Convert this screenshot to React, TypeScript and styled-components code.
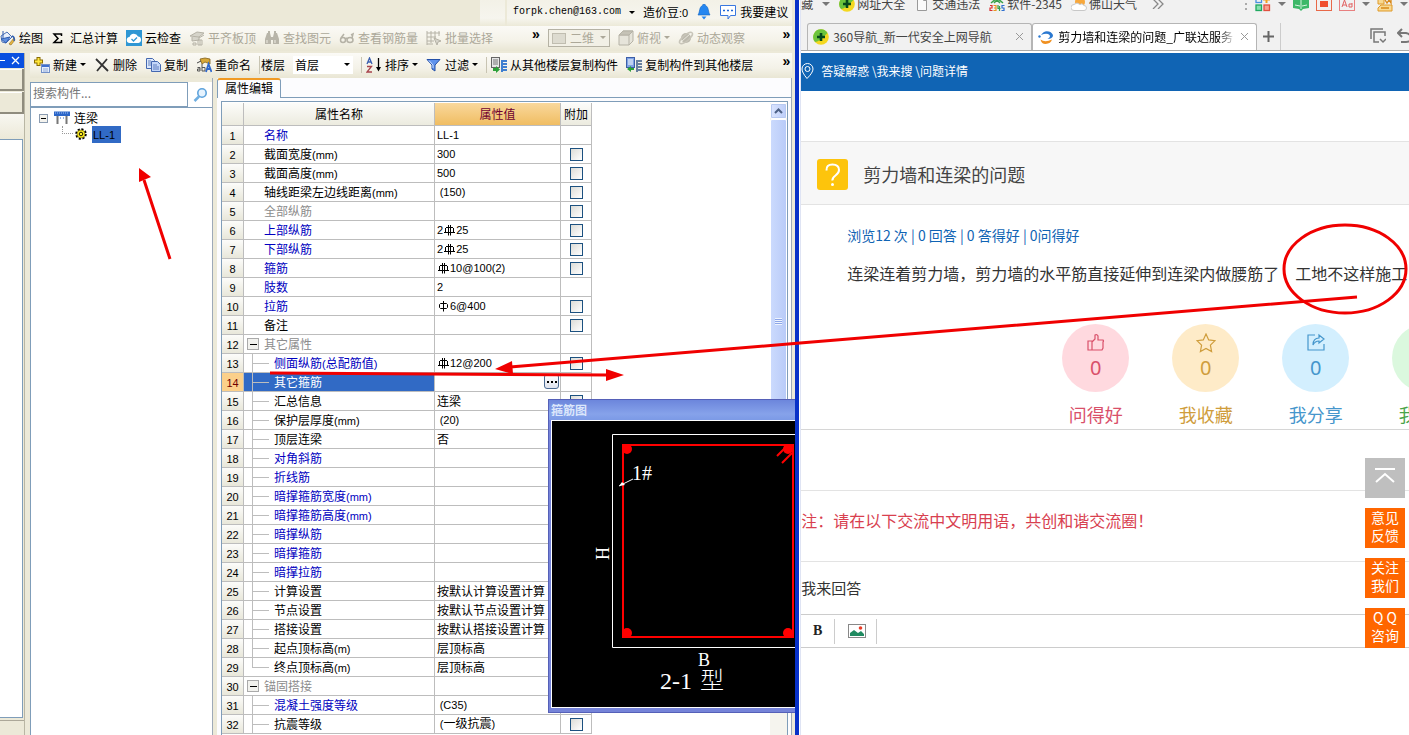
import React from 'react';
import styled, { createGlobalStyle, css } from 'styled-components';

const GlobalStyle = createGlobalStyle`
  * { box-sizing: border-box; }
  html, body, #root { height: 100%; }
  body {
    margin: 0;
    overflow: hidden;
    background: #fff;
    color: #000;
    font: 12px/16px "Noto Sans CJK SC", "Liberation Sans", sans-serif;
  }
  button, input, select { font: inherit; color: inherit; margin: 0; }
  button { border: 0; padding: 0; background: none; }
`;

/* ---------- shared ---------- */

const Latin = styled.span`
  font-family: "Liberation Sans", sans-serif;
  font-size: 11px;
`;

function Mixed({ text }: { text: string }) {
  const runs = text.split(/([\x21-\x7e]+)/).filter(Boolean);
  return (
    <>
      {runs.map((run, i) =>
        /^[\x21-\x7e]/.test(run) ? <Latin key={i}>{run}</Latin> : <React.Fragment key={i}>{run}</React.Fragment>
      )}
    </>
  );
}

const Icon = styled.svg.attrs({ viewBox: '0 0 16 16', 'aria-hidden': true })`
  flex: none;
  width: 16px;
  height: 16px;
  fill: none;
`;

const Caret = styled.span<{ $color?: string; $size?: number }>`
  flex: none;
  width: 0;
  height: 0;
  border: ${p => p.$size ?? 3}px solid transparent;
  border-top-color: ${p => p.$color ?? '#000'};
  border-bottom-width: 0;
`;

/* ---------- frame ---------- */

const Desktop = styled.div`
  position: relative;
  display: grid;
  grid-template-columns: minmax(0, 46fr) minmax(0, 35fr);
  height: 100vh;
  overflow: hidden;
`;

const CadWindow = styled.section`
  position: relative;
  display: flex;
  flex-direction: column;
  overflow: hidden;
  margin-right: 1px;
  padding-right: 3px;
  background: #ece9d8;
  border-right: 4px solid #0831c8;
`;

const AccountBar = styled.div`
  display: flex;
  justify-content: flex-end;
  flex: none;
  height: 26px;
`;

const AccountStub = styled.span`
  width: 25px;
  margin-right: 2px;
  background: linear-gradient(#f3f1e7, #f6f5ee 70%, #ece9d8);
`;

const AccountItems = styled.div`
  display: flex;
  align-items: center;
  padding: 0 4px 2px 6px;
  background: linear-gradient(#f3f1e7, #f6f5ee 70%, #ece9d8);
`;

const Email = styled.span`
  font: 10px/16px "Liberation Mono", monospace;
`;

const AccountButton = styled.button`
  display: flex;
  align-items: center;
  gap: 4px;
  margin-left: 8px;
  white-space: nowrap;
`;

const Toolbar = styled.div`
  display: flex;
  align-items: center;
  gap: 8px;
  flex: none;
  height: 25px;
  padding-bottom: 2px;
  overflow: hidden;
  white-space: nowrap;
  background: linear-gradient(#fbfaf6, #f4f2e8 60%, #e9e6d4);
`;

const MainToolbar = styled(Toolbar)`
  margin-bottom: 2px;
`;

const EditToolbar = styled(Toolbar)`
  padding-left: 4px;
`;

const ToolButton = styled.button`
  display: flex;
  align-items: center;
  gap: 3px;
  flex: none;
  &:disabled { color: #aca899; }
`;

const ToolGroup = styled.div`
  display: flex;
  align-items: center;
  gap: 8px;
  flex: none;
  padding-left: 4px;
  border-left: 1px solid #c8c4b2;
`;

const FloorGroup = styled(ToolGroup)`
  padding-left: 1px;
`;

const ComboBox = styled.span<{ $disabled?: boolean }>`
  display: flex;
  align-items: center;
  flex: none;
  width: 60px;
  height: 18px;
  padding: 0 3px 0 2px;
  background: #fff;
  select {
    flex: 1;
    min-width: 0;
    border: 0;
    padding: 0;
    appearance: none;
    background: none;
    opacity: 1;
  }
  ${p => p.$disabled && css`
    gap: 3px;
    width: 62px;
    color: #aca899;
    background: #f2f0e6;
    border: 1px solid #b5b2a4;
  `}
`;

const More = styled.button<{ $push?: boolean }>`
  align-self: flex-start;
  margin-left: ${p => (p.$push ? 'auto' : '31px')};
  padding-right: ${p => (p.$push ? '2px' : '0')};
  font: 700 14px/16px "Liberation Sans", sans-serif;
`;

/* ---------- workspace ---------- */

const Workspace = styled.div`
  display: flex;
  flex: 1;
  min-height: 0;
`;

const Dock = styled.aside`
  display: flex;
  flex-direction: column;
  flex: none;
  width: 25px;
  margin-right: 5px;
  border-right: 1px solid #b9b6a4;
`;

const DockTitle = styled.div`
  display: flex;
  align-items: center;
  justify-content: flex-end;
  gap: 6px;
  height: 15px;
  padding-right: 4px;
  background: #0a50e0;
`;

const DockButton = styled.button`
  height: 22px;
  margin-top: 1px;
  background: #ece9d8;
  border: solid #8f8c7e;
  border-width: 0 2px 2px 0;
  box-shadow: inset 0 1px #fff;
`;

const DockGap = styled.div`
  height: 25px;
  background: linear-gradient(#f8f7f1, #ece9d8);
`;

const DockList = styled.div`
  flex: 1;
  margin: 0 1px 2px 0;
  background: #fff;
  border: solid #7f9db9;
  border-width: 1px 1px 1px 0;
`;

const DockFoot = styled.div`
  height: 94px;
  border-top: 1px solid #aca899;
`;

const DockFooter = styled(DockFoot)`
  height: 15px;
`;

const Editor = styled.div`
  display: flex;
  flex-direction: column;
  flex: 1;
  min-width: 0;
`;

const EditorBody = styled.div`
  display: flex;
  gap: 4px;
  flex: 1;
  min-height: 0;
`;

const TreePanel = styled.div`
  display: flex;
  flex-direction: column;
  flex: none;
  width: 183px;
  padding-top: 4px;
  border-right: 1px solid #9da9b8;
`;

const SearchBox = styled.div`
  display: flex;
  height: 25px;
  input {
    flex: 1;
    min-width: 0;
    height: 25px;
    padding: 0 2px 4px;
    background: #fff;
    border: 1px solid #7f9db9;
    outline: 0;
  }
  input::placeholder { color: #777; opacity: 1; }
  button {
    display: grid;
    place-items: center;
    width: 24px;
    background: #fff;
  }
`;

const Tree = styled.ul`
  flex: 1;
  margin: 0;
  padding: 2px 0 0 8px;
  list-style: none;
  background: #fff;
  border: solid #7f9db9;
  border-width: 1px 0 0 1px;
  ul { margin: 0; padding: 0 0 0 23px; list-style: none; }
`;

const TreeItem = styled.div`
  display: flex;
  align-items: center;
  height: 16px;
`;

const TreeToggle = styled.button`
  display: grid;
  place-items: center;
  width: 9px;
  height: 9px;
  margin-right: 6px;
  background: #f4f3ee;
  border: 1px solid #8a9bb0;
  &::before { content: ""; width: 5px; height: 1px; background: #000; }
`;

const TreeStem = styled.span`
  width: 11px;
  height: 8px;
  align-self: flex-start;
  border: dotted #999;
  border-width: 0 0 1px 1px;
`;

const TreeLabel = styled.span<{ $selected?: boolean }>`
  margin-left: 3px;
  padding: 0 2px 0 1px;
  ${p => p.$selected && css`padding-right: 6px; background: #316ac5;`}
`;

/* ---------- property grid ---------- */

const PropertyPanel = styled.div`
  display: flex;
  flex-direction: column;
  flex: 1;
  min-width: 0;
  background: #fcfcfe;
  border-right: 1px solid #9da9b8;
`;

const TabRow = styled.div`
  display: flex;
  height: 20px;
  &::after { content: ""; flex: 1; border-bottom: 1px solid #7f9db9; }
`;

const PanelTab = styled.button`
  width: 64px;
  padding-bottom: 2px;
  background: #fcfcfe;
  border: 1px solid #7f9db9;
  border-top: 2px solid #f09a24;
  border-bottom: 0;
  border-radius: 3px 3px 0 0;
`;

const GridFrame = styled.div`
  display: flex;
  justify-content: space-between;
  flex: 1;
  min-height: 0;
  margin: 3px 3px 0 4px;
  padding-top: 1px;
  overflow: hidden;
  background: #fff;
  border: solid #7f9db9;
  border-width: 1px 1px 0;
`;

const Table = styled.table`
  width: 370px;
  height: max-content;
  table-layout: fixed;
  border-collapse: separate;
  border-spacing: 0;
  white-space: nowrap;
  th, td { padding: 0; border: solid #bdbdbd; border-width: 0 1px 1px 0; font-weight: 400; }
  th[scope=col] { height: 23px; background: linear-gradient(#fcfcfa, #ecebdf); }
  th[scope=row] { height: 19px; background: linear-gradient(#fcfcfa, #e8e7da); }
`;

const ValueHead = styled.th`
  &&& { color: #700030; background: linear-gradient(#f9d89c, #f0bd62); }
`;

const RowNumber = styled.th<{ $active?: boolean }>`
  text-align: center;
  ${p => p.$active && css`&&& { color: #700000; background: #fbd08a; }`}
`;

type Tone = 'blue' | 'gray' | 'black';

const NameCell = styled.td<{ $tone: Tone; $active?: boolean }>`
  color: ${p => (p.$active ? '#fff' : { blue: '#0000c0', gray: '#8c8c8c', black: '#000' }[p.$tone])};
  background: ${p => (p.$active ? '#316ac5' : '#fff')};
`;

const NameLine = styled.div<{ $indent: number }>`
  display: flex;
  align-items: center;
  height: 18px;
  padding-left: ${p => p.$indent}px;
`;

const Branch = styled.span<{ $last?: boolean }>`
  width: 17px;
  height: 18px;
  margin-right: 5px;
  background:
    linear-gradient(#bdbdbd, #bdbdbd) 0 0 / 1px ${p => (p.$last ? '9px' : '18px')} no-repeat,
    linear-gradient(#bdbdbd, #bdbdbd) 0 9px / 17px 1px no-repeat;
`;

const GroupToggle = styled.button`
  display: grid;
  place-items: center;
  width: 12px;
  height: 12px;
  margin-right: 5px;
  background: #f2f2ee;
  border: 1px solid #aaa;
  &::before { content: ""; width: 7px; height: 1px; background: #000; }
`;

const ValueLine = styled.div`
  display: flex;
  align-items: center;
  height: 18px;
  padding: 0 1px 1px 2px;
`;

const EllipsisButton = styled.button`
  display: flex;
  align-items: center;
  justify-content: center;
  gap: 2px;
  width: 15px;
  height: 15px;
  margin-left: auto;
  background: linear-gradient(#fff, #dfe3ee);
  border: 1px solid #4a6a92;
  border-radius: 3px;
  i { width: 2px; height: 2px; background: #000; }
`;

const Check = styled.input.attrs({ type: 'checkbox' })`
  display: block;
  appearance: none;
  width: 13px;
  height: 13px;
  && { margin: 0 auto; }
  background: linear-gradient(135deg, #dcdcd7, #fff);
  border: 1px solid #1c5180;
`;

const ScrollBar = styled.div`
  display: flex;
  flex-direction: column;
  width: 17px;
  background: #f5f4ee;
`;

const ScrollUp = styled.button`
  display: grid;
  place-items: center;
  height: 16px;
  background: linear-gradient(90deg, #dbe5fe, #bccdf9);
  border: 1px solid #fff;
  outline: 1px solid #b7c9f0;
  outline-offset: -2px;
  border-radius: 2px;
`;

const ScrollThumb = styled.div`
  display: grid;
  place-items: center;
  height: 404px;
  background: linear-gradient(90deg, #cbdafd, #b9cbf8);
  border: 1px solid #fff;
  border-radius: 2px;
  &::before {
    content: "";
    width: 7px;
    height: 7px;
    background: repeating-linear-gradient(#eef4fe 0 1px, #8ca5e8 1px 2px);
  }
`;

/* ---------- floating diagram ---------- */

const Floating = styled.div`
  position: absolute;
  top: 399px;
  left: 548px;
  right: 0;
  height: 314px;
  display: flex;
  flex-direction: column;
  padding: 0 0 4px 2px;
  background: #7583d8;
  border: solid #5560b8;
  border-width: 1px 0 1px 1px;
`;

const FloatingTitle = styled.div`
  height: 20px;
  margin-left: -2px;
  padding: 2px 2px 0;
  color: #dbe6fb;
  font-weight: 700;
  background: linear-gradient(#6c86dc, #86a2ea 70%, #7c9ae6);
`;

const Drawing = styled.svg`
  flex: 1;
  min-height: 0;
  width: 100%;
  background: #000;
  border: solid #fff;
  border-width: 1px 0 1px 1px;
  fill: none;
`;

/* ---------- browser ---------- */

const BrowserWindow = styled.section`
  position: relative;
  display: flex;
  flex-direction: column;
  min-width: 0;
  overflow: hidden;
  background: #fff;
  border-left: 1px solid #dfe4f4;
`;

const Bookmarks = styled.div`
  display: flex;
  align-items: center;
  gap: 9px;
  flex: none;
  height: 24px;
  margin-top: -8px;
  color: #444;
  white-space: nowrap;
  background: #f1f1f1;
`;

const Bookmark = styled.a.attrs({ href: '#' })`
  display: flex;
  align-items: center;
  gap: 2px;
  color: inherit;
  text-decoration: none;
`;

const Tools = styled.div`
  display: flex;
  align-items: center;
  gap: 7px;
  margin-left: auto;
  padding-right: 1px;
`;

const TabStrip = styled.div`
  display: flex;
  align-items: flex-end;
  flex: none;
  height: 35px;
  padding-left: 6px;
  background: #f1f1f1;
  border-bottom: 1px solid #a9a9a9;
`;

const BrowserTab = styled.div<{ $active?: boolean }>`
  display: flex;
  align-items: center;
  gap: 4px;
  flex: 0 1 225px;
  min-width: 0;
  height: 27px;
  padding: 0 7px 1px 5px;
  color: ${p => (p.$active ? '#000' : '#444')};
  background: ${p => (p.$active ? '#fff' : '#f1f1f1')};
  border: 1px solid #b5b5b5;
  border-bottom: 0;
  border-radius: 3px 3px 0 0;
`;

const TabTitle = styled.span<{ $fade?: boolean }>`
  flex: 1;
  overflow: hidden;
  white-space: nowrap;
  ${p => p.$fade && css`mask-image: linear-gradient(90deg, #000 90%, transparent);`}
`;

const CloseButton = styled.button`
  display: grid;
  place-items: center;
  width: 9px;
`;

const NewTab = styled.button`
  display: grid;
  place-items: center;
  width: 24px;
  height: 27px;
  border-right: 1px solid #ccc;
`;

const TabTools = styled.div`
  display: flex;
  gap: 11px;
  margin-left: auto;
  padding-bottom: 6px;
`;

const Crumbs = styled.nav`
  display: flex;
  align-items: center;
  gap: 6px;
  flex: none;
  height: 38px;
  margin-top: 2px;
  padding-bottom: 3px;
  color: #fff;
  background: #1064b4;
  a { color: inherit; text-decoration: none; }
`;

const QuestionHead = styled.header`
  display: flex;
  align-items: center;
  gap: 15px;
  flex: none;
  height: 64px;
  margin-top: 50px;
  padding: 3px 16px 0;
  background: #f7f7f7;
  border: solid #e3e3e3;
  border-width: 1px 0;
  h1 { margin: 0; padding-bottom: 1px; color: #444; font-size: 18px; line-height: 24px; font-weight: 400; }
`;

const QuestionIcon = styled.svg`
  width: 31px;
  height: 31px;
  fill: none;
`;

const QuestionBody = styled.div`
  display: flex;
  flex-direction: column;
  flex: none;
  height: 225px;
  padding: 20px 0 0 46px;
  white-space: nowrap;
  border-bottom: 1px solid #d6d6d6;
`;

const Meta = styled.p`
  margin: 0;
  color: #1064b4;
  font: 14px/20px "Noto Sans CJK SC", sans-serif;
`;

const Content = styled.p`
  display: flex;
  gap: 16px;
  margin: 16px 0 0;
  color: #333;
  font-size: 16px;
  line-height: 24px;
`;

const Stats = styled.div`
  display: flex;
  gap: 43px;
  margin: 39px 0 0 215px;
`;

const Stat = styled.button<{ $fg: string }>`
  display: flex;
  flex-direction: column;
  align-items: center;
  gap: 10px;
  flex: none;
  width: 67px;
  color: ${p => p.$fg};
  font-size: 18px;
  line-height: 24px;
`;

const Bubble = styled.span<{ $bg: string }>`
  display: flex;
  flex-direction: column;
  align-items: center;
  gap: 3px;
  width: 67px;
  height: 68px;
  padding-top: 9px;
  border-radius: 50%;
  background: ${p => p.$bg};
  font: 20px/24px "Noto Sans", sans-serif;
  svg { width: 20px; height: 20px; }
`;

const Notice = styled.p`
  flex: none;
  height: 72px;
  margin: 60px 0 0;
  padding-top: 17px;
  color: #d8404f;
  font-size: 16px;
  line-height: 24px;
  border: solid #e3e3e3;
  border-width: 1px 0;
`;

const AnswerTitle = styled.h2`
  flex: none;
  margin: 14px 0;
  color: #333;
  font-size: 15px;
  line-height: 24px;
  font-weight: 400;
`;

const FormatBar = styled.div`
  display: flex;
  align-items: center;
  flex: none;
  height: 34px;
  border: solid #ccc;
  border-width: 1px 0;
  button {
    display: grid;
    place-items: center;
    height: 25px;
    border-right: 1px solid #ccc;
  }
`;

const BoldButton = styled.button`
  width: 34px;
  color: #222;
  font: 700 14px/16px "Liberation Serif", serif;
`;

const ImageButton = styled.button`
  width: 42px;
  padding: 0 0 0 3px;
`;

const SideRail = styled.div`
  position: absolute;
  top: 458px;
  right: 4px;
  display: grid;
  gap: 10px;
`;

const RailButton = styled.button<{ $gray?: boolean }>`
  display: grid;
  place-items: center;
  width: 40px;
  height: 40px;
  padding-bottom: 4px;
  color: #fff;
  font-size: 14px;
  line-height: 18px;
  background: ${p => (p.$gray ? '#bfbfbf' : '#ff6600')};
  span { width: 28px; }
`;

const Annotations = styled.svg`
  position: absolute;
  inset: 0;
  width: 100%;
  height: 100%;
  pointer-events: none;
  fill: none;
  stroke: #f00000;
  stroke-width: 3;
`;

/* ---------- icons ---------- */

const PaintIcon = () => (
  <Icon>
    <path d="M1 6l6-4 5 5-6 6-4-1z" fill="#e8f0fc" stroke="#4a6fb5" />
    <path d="M3 1v7M1 9l9-2-4 6z" stroke="#2f5db0" fill="#5f8fe0" />
    <path d="M9 14l5-6 1 2-4 5z" fill="#e8b840" stroke="#8f6a20" strokeWidth=".6" />
    <path d="M12 6q3 1 2 5" stroke="#2f5db0" strokeWidth="1.5" />
  </Icon>
);
const SigmaIcon = () => (
  <Icon><path d="M10.500 6V4H3l4 4.500L3 12.500h7.500V10" stroke="#000" strokeWidth="1.500" /></Icon>
);
const CloudIcon = () => (
  <Icon>
    <rect width="16" height="16" fill="#2f97d4" />
    <path d="M4 13a3 3 0 0 1-.5-6 4.500 4.500 0 0 1 8.500-.5 3.300 3.300 0 0 1 .5 6.500z" fill="#fff" />
    <path d="M5.500 9l2 2L11 7.500" stroke="#2f97d4" strokeWidth="1.300" />
  </Icon>
);
const SlabIcon = () => (
  <Icon stroke="#b5b2a6">
    <path d="M1 6l7-4 7 1-5 4zM3 7v4l7-1V7M10 8l5-3" fill="#d6d4ca" /><path d="M4 13h3v2H4zM9 10h4v5H9zM11 10v5" />
  </Icon>
);
const BinocularsIcon = () => (
  <Icon fill="#b8b5a9">
    <path d="M3 3h3l1 4v7H1V9zM10 3h3l2 6v5H9V7zM7 7h2v3H7zM4 1h2v2H4zM10 1h2v2h-2z" fill="#b8b5a9" />
    <path d="M3 10v3M11 10v3" stroke="#f0eee4" />
  </Icon>
);
const GlassesIcon = () => (
  <Icon stroke="#b5b2a6" strokeWidth="1.500"><circle cx="4" cy="10" r="2.500" /><ellipse cx="11" cy="10" rx="3" ry="2.500" /><path d="M6 9l2-1M13 8l1-4-2 1M2 8l3-4" /></Icon>
);
const BatchIcon = () => (
  <Icon stroke="#b5b2a6"><path d="M1 1v14M1 3h13M1 7h9M1 11h7M5 1v12M9 1v8M13 1v5M1 14h6" /><path d="M8 8l7 3-3 1-1 3z" fill="#d6d4ca" /></Icon>
);
const CubeIcon = () => (
  <Icon stroke="#b5b2a6"><path d="M1 5l4-4h10v10l-4 4H1z" fill="#e6e4da" /><path d="M1 5h10v10M11 5l4-4" /><path d="M1 5l4-4h10l-4 4z" fill="#c5c2b6" /></Icon>
);
const OrbitIcon = () => (
  <Icon><circle cx="8" cy="8" r="5" fill="#bcb9ad" /><ellipse cx="8" cy="8" rx="8" ry="3" transform="rotate(-40 8 8)" stroke="#c8c5b9" strokeWidth="1.500" /><path d="M4 11l8-7" stroke="#e8e6dc" /></Icon>
);
const RectIcon = () => (
  <Icon><rect x="1.500" y="3.500" width="13" height="10" fill="#dddbd0" stroke="#c0bdb0" /></Icon>
);
const NewIcon = () => (
  <Icon>
    <path d="M4.500 0v9M0 4.500h9" stroke="#8a6d00" strokeWidth="4" /><path d="M4.500 1v7M1 4.500h7" stroke="#ffe63c" strokeWidth="2" />
    <rect x="7.500" y="7.500" width="8" height="8" fill="#e6effc" stroke="#7290c8" /><path d="M8 9h7" stroke="#3f6fd0" strokeWidth="2" /><path d="M9 12h5M9 14h5" stroke="#8fa8d8" />
  </Icon>
);
const DeleteIcon = () => (
  <Icon stroke="#333" strokeWidth="1.800"><path d="M2 2l12 12M13 2L3 14" /></Icon>
);
const CopyIcon = () => (
  <Icon stroke="#4468b0">
    <path d="M1.500 1.500h6l2 2v8h-8z" fill="#dce8fb" /><path d="M6.500 4.500h6l3 3v7h-9z" fill="#c3d6f8" /><path d="M8 8h4M8 10h6M8 12h6M3 4h3M3 6h3M3 8h3" strokeWidth=".8" />
  </Icon>
);
const RenameIcon = () => (
  <Icon>
    <path d="M4 2l5-1 5 1v5l-5-2-3 2z" fill="#d8a838" stroke="#80601c" strokeWidth=".8" /><path d="M1 6l4-2" stroke="#444" />
    <path d="M1.500 10.500H4V14H1.500v-2H4M6 7v7h3v-3.500H6" stroke="#555" /><path d="M10 15l2.500-8 3 8M11 12h4" stroke="#2f68cc" strokeWidth="1.800" />
  </Icon>
);
const SortIcon = () => (
  <Icon>
    <path d="M1 7l2.500-6L6 7M2 5h3" stroke="#3a5fb0" strokeWidth="1.300" /><path d="M1 9.500h4.500L1 15h5" stroke="#a8434c" strokeWidth="1.300" />
    <path d="M12.500 1v11" stroke="#000" strokeWidth="1.300" /><path d="M10 10h5l-2.500 4.500z" fill="#000" />
  </Icon>
);
const FunnelIcon = () => (
  <Icon><path d="M1 2.500h13l-5 5.500v6l-3-2V8z" fill="#5f92ec" stroke="#2450a8" /><path d="M3 3.500l4 4.500v3" stroke="#cfe0ff" /></Icon>
);
const TransferIcon = ({ flip }: { flip?: boolean }) => (
  <Icon>
    <rect x=".5" y=".5" width="8" height="10" fill={flip ? '#7ea2e4' : '#e6e6e6'} stroke={flip ? '#3c5ea8' : '#666'} />
    <path d="M2 3h5M2 5h5M2 7h5" stroke={flip ? '#fff' : '#777'} />
    <path d="M11 3v12M11 4h5M11 7h5M11 10h5M11 13h5" stroke={flip ? '#68809f' : '#3f7fd0'} strokeWidth="2" />
    <path d={flip ? 'M8 11H5V9l-4 3 4 3v-2h3z' : 'M2 11h3V9l4 3.500L5 16v-2H2z'} fill="#2ca038" />
  </Icon>
);
const BellIcon = () => (
  <Icon><path d="M8 0q1.500 0 1.500 1.500C13 3 12 8 14 11H2c2-3 1-8 4.500-9.500Q6.500 0 8 0z" fill="#2486f0" stroke="#1464c0" strokeWidth=".6" /><path d="M5.500 12.500h5L8 15.500z" fill="#2486f0" /></Icon>
);
const MessageIcon = () => (
  <Icon><path d="M.5 1.500h15v10h-5L8 15v-3.500H.5z" fill="#fff" stroke="#3a78e0" /><path d="M3 6.500h2M7 6.500h2M11 6.500h2" stroke="#1e66d8" strokeWidth="1.500" /></Icon>
);
const SearchIcon = () => (
  <Icon><circle cx="10" cy="6" r="4.200" fill="#e6f3fe" stroke="#5ea3dc" strokeWidth="1.600" /><path d="M7 9.500l-4.500 4.500" stroke="#6faee0" strokeWidth="2.500" /></Icon>
);
const BeamIcon = () => (
  <Icon><path d="M0 1.500h16V6H0z" fill="#2c66c8" /><path d="M1 3h14" stroke="#9fc0f4" strokeDasharray="1 1" /><path d="M3.500 6v8M12.500 6v8" stroke="#777" strokeWidth="2" /><path d="M6 8h1M9 8h1" stroke="#2c66c8" /></Icon>
);
const GearIcon = () => (
  <Icon>
    <circle cx="8" cy="8" r="4.500" stroke="#000" strokeWidth="2.500" strokeDasharray="2 1.500" /><circle cx="8" cy="8" r="4" fill="#ffee22" stroke="#5c5400" strokeWidth=".6" />
    <circle cx="8" cy="8" r="1.800" stroke="#000" strokeWidth=".9" />
  </Icon>
);
const NavIcon = () => (
  <Icon><circle cx="8" cy="8" r="7.800" fill="#f4d820" /><path d="M8 .2a7.800 7.800 0 0 0-6 12.800Q6 13 14.500 4A7.800 7.800 0 0 0 8 .2z" fill="#6cc43c" /><path d="M8 4v8M4 8h8" stroke="#06491c" strokeWidth="2.600" /></Icon>
);
const PageIcon = () => (
  <Icon><path d="M3.500 1.500h6l3 3v10h-9zM9.500 1.500v3h3" stroke="#999" fill="#fafafa" /></Icon>
);
const NumbersIcon = () => (
  <Icon strokeWidth="1.200">
    <path d="M2 7l6-5 6 5M5 7l3-3 3 3" stroke="#38a048" strokeWidth="1.500" />
    <path d="M1 9.500h2V12H1v2.500h2.500" stroke="#d83030" /><path d="M4.500 9.500h2.500V12H5h2v2.500H4.500" stroke="#e89820" /><path d="M9 9v3.500h2.500M10.500 10v5" stroke="#38a048" /><path d="M15.500 9.500H13V12h2v2.500h-2.500" stroke="#3070d0" />
  </Icon>
);
const WeatherIcon = () => (
  <Icon><circle cx="9" cy="6" r="5" fill="#f8a83c" /><path d="M3 14.500a3 3 0 0 1 0-6q3-3 6 0 2-2 4 1a2.500 2.500 0 0 1 0 5z" fill="#fff" stroke="#c8c8c8" /></Icon>
);
const SwirlIcon = () => (
  <Icon>
    <path d="M3 6Q6 1 11 2.500q4 1.500 4 4.500-1 3-5.500 3Q13 8 11.500 6 9 3.500 3 6z" fill="#2a78d0" />
    <path d="M2.500 10.500Q7 14 14 10.500q-1 4-6.500 4.500-4 0-5-4.500z" fill="#f09020" />
    <circle cx="1.500" cy="7.500" r="1.200" fill="#2a78d0" />
  </Icon>
);
const AppsIcon = () => (
  <Icon strokeWidth="1.300"><rect x="1" y="1" width="5.500" height="5.500" stroke="#4a90e0" /><path d="M11.500 0v7M8 3.500h7" stroke="#f0a020" strokeWidth="2" /><rect x="1" y="9" width="5.500" height="5.500" stroke="#20a860" fill="#88e0b0" /><rect x="9" y="9" width="5.500" height="5.500" stroke="#e05040" fill="#f8a090" /></Icon>
);
const BookIcon = () => (
  <Icon><path d="M0 1l8 2 8-2v11l-6 1-2 2-2-2-6-1z" fill="#3cb868" /><path d="M8 3v10M2 9l5 1M14 9l-5 1" stroke="#d8f4e0" /></Icon>
);
const CaptureIcon = () => (
  <Icon><rect x=".5" y=".5" width="15" height="14" stroke="#e86848" /><rect x="4" y="5" width="8" height="6" fill="#f05030" /></Icon>
);
const TranslateIcon = () => (
  <Icon><rect x=".5" y=".5" width="15" height="14" stroke="#e88080" /><path d="M3 11l2.500-7L8 11M4 9h3M13 7v4h-3V8h3" stroke="#e06060" /></Icon>
);
const GameIcon = () => (
  <Icon><path d="M1 1h6v7H1zM4 9h11v6H1v-3z" fill="#f8d890" stroke="#e09a28" /><path d="M8 4l2 3 2-3 2 3V1M4 12h8" stroke="#d88818" strokeWidth="1.300" /></Icon>
);

/* ---------- data ---------- */

type Prop = {
  name: string;
  tone?: Tone;
  value?: string;
  bar?: 1 | 3;
  lead?: string;
  check?: boolean;
  level?: 'group' | 'child' | 'last';
};

const rows: Prop[] = [
  { name: '名称', tone: 'blue', value: 'LL-1' },
  { name: '截面宽度(mm)', value: '300', check: true },
  { name: '截面高度(mm)', value: '500', check: true },
  { name: '轴线距梁左边线距离(mm)', value: ' (150)', check: true },
  { name: '全部纵筋', tone: 'gray', check: true },
  { name: '上部纵筋', tone: 'blue', lead: '2', bar: 3, value: '25', check: true },
  { name: '下部纵筋', tone: 'blue', lead: '2', bar: 3, value: '25', check: true },
  { name: '箍筋', tone: 'blue', bar: 3, value: '10@100(2)', check: true },
  { name: '肢数', tone: 'blue', value: '2' },
  { name: '拉筋', tone: 'blue', bar: 1, value: '6@400', check: true },
  { name: '备注', check: true },
  { name: '其它属性', tone: 'gray', level: 'group' },
  { name: '侧面纵筋(总配筋值)', tone: 'blue', bar: 3, value: '12@200', check: true, level: 'child' },
  { name: '其它箍筋', level: 'child' },
  { name: '汇总信息', value: '连梁', check: true, level: 'child' },
  { name: '保护层厚度(mm)', value: ' (20)', level: 'child' },
  { name: '顶层连梁', value: '否', level: 'child' },
  { name: '对角斜筋', tone: 'blue', level: 'child' },
  { name: '折线筋', tone: 'blue', level: 'child' },
  { name: '暗撑箍筋宽度(mm)', tone: 'blue', level: 'child' },
  { name: '暗撑箍筋高度(mm)', tone: 'blue', level: 'child' },
  { name: '暗撑纵筋', tone: 'blue', level: 'child' },
  { name: '暗撑箍筋', tone: 'blue', level: 'child' },
  { name: '暗撑拉筋', tone: 'blue', level: 'child' },
  { name: '计算设置', value: '按默认计算设置计算', level: 'child' },
  { name: '节点设置', value: '按默认节点设置计算', level: 'child' },
  { name: '搭接设置', value: '按默认搭接设置计算', level: 'child' },
  { name: '起点顶标高(m)', value: '层顶标高', level: 'child' },
  { name: '终点顶标高(m)', value: '层顶标高', level: 'last' },
  { name: '锚固搭接', tone: 'gray', level: 'group' },
  { name: '混凝土强度等级', tone: 'blue', value: ' (C35)', level: 'child' },
  { name: '抗震等级', value: ' (一级抗震)', check: true, level: 'child' },
];

const ACTIVE_ROW = 14;

const BarGlyph = styled.svg`
  flex: none;
  width: 13px;
  height: 12px;
  fill: none;
  stroke: #000;
`;

const RebarMark = ({ grade }: { grade: 1 | 3 }) => (
  <BarGlyph viewBox="0 0 13 12" role="img" aria-label={`${grade}级钢筋`}>
    {grade === 3
      ? <path d="M3 3.500h7M2.500 4v4M10.500 4v4M1 8.500h11M5.500 1v10.500M7.500 1v10.500" />
      : <path d="M3.500 3.500h6l1 1v3l-1 1h-6l-1-1v-3zM6.500 1v10.500" />}
  </BarGlyph>
);

function PropertyRow({ row, index }: { row: Prop; index: number }) {
  const active = index === ACTIVE_ROW;
  const plain = !row.level;
  return (
    <tr>
      <RowNumber scope="row" $active={active}><Latin>{index}</Latin></RowNumber>
      <NameCell $tone={row.tone ?? 'black'} $active={active}>
        <NameLine $indent={plain ? 20 : row.level === 'group' ? 3 : 8}>
          {row.level === 'group' && <GroupToggle aria-label="折叠" />}
          {(row.level === 'child' || row.level === 'last') && <Branch $last={row.level === 'last'} />}
          <span><Mixed text={row.name} /></span>
        </NameLine>
      </NameCell>
      <td>
        <ValueLine>
          {row.lead && <Latin>{row.lead}</Latin>}
          {row.bar && <RebarMark grade={row.bar} />}
          {row.value && <span>{row.value.startsWith(' ') && '\u00a0'}<Mixed text={row.value.trim()} /></span>}
          {active && <EllipsisButton aria-label="编辑"><i /><i /><i /></EllipsisButton>}
        </ValueLine>
      </td>
      <td>{row.check && <Check aria-label={`附加 ${row.name}`} />}</td>
    </tr>
  );
}

function Cad() {
  return (
    <CadWindow>
      <AccountBar>
        <AccountStub />
        <AccountItems>
          <Email>forpk.chen@163.com</Email>
          <AccountButton aria-label="账户"><Caret /></AccountButton>
          <AccountButton><span>造价豆<Latin>:0</Latin></span></AccountButton>
          <AccountButton aria-label="通知"><BellIcon /></AccountButton>
          <AccountButton><MessageIcon />我要建议</AccountButton>
        </AccountItems>
      </AccountBar>
      <MainToolbar>
        <ToolButton><PaintIcon />绘图</ToolButton>
        <ToolButton><SigmaIcon />汇总计算</ToolButton>
        <ToolButton><CloudIcon />云检查</ToolButton>
        <ToolButton disabled><SlabIcon />平齐板顶</ToolButton>
        <ToolButton disabled><BinocularsIcon />查找图元</ToolButton>
        <ToolButton disabled><GlassesIcon />查看钢筋量</ToolButton>
        <ToolButton disabled><BatchIcon />批量选择</ToolButton>
        <More aria-label="更多">»</More>
        <ComboBox $disabled>
          <RectIcon />
          <select disabled aria-label="视图"><option>二维</option></select>
          <Caret $color="#aca899" />
        </ComboBox>
        <ToolButton disabled><CubeIcon />俯视<Caret $color="#aca899" /></ToolButton>
        <ToolButton disabled><OrbitIcon />动态观察</ToolButton>
        <More $push aria-label="更多">»</More>
      </MainToolbar>
      <Workspace>
        <Dock>
          <DockTitle>
            <svg width="5" height="9" stroke="#fff"><path d="M0 4.500h5" /></svg>
            <svg width="9" height="9" stroke="#fff" strokeWidth="1.300"><path d="M1 1l7 7M8 1L1 8" /></svg>
          </DockTitle>
          <DockButton aria-label="面板一" />
          <DockButton aria-label="面板二" />
          <DockGap />
          <DockList />
          <DockFooter />
        </Dock>
        <Editor>
          <EditToolbar>
            <ToolButton><NewIcon />新建<Caret /></ToolButton>
            <ToolButton><DeleteIcon />删除</ToolButton>
            <ToolButton><CopyIcon />复制</ToolButton>
            <ToolButton><RenameIcon />重命名</ToolButton>
            <FloorGroup>
              <label htmlFor="floor">楼层</label>
              <ComboBox>
                <select id="floor"><option>首层</option></select>
                <Caret />
              </ComboBox>
            </FloorGroup>
            <ToolGroup>
              <ToolButton><SortIcon />排序<Caret /></ToolButton>
              <ToolButton><FunnelIcon />过滤<Caret /></ToolButton>
            </ToolGroup>
            <ToolGroup>
              <ToolButton><TransferIcon />从其他楼层复制构件</ToolButton>
              <ToolButton><TransferIcon flip />复制构件到其他楼层</ToolButton>
            </ToolGroup>
            <More $push aria-label="更多">»</More>
          </EditToolbar>
          <EditorBody>
            <TreePanel>
              <SearchBox>
                <input aria-label="搜索构件" placeholder="搜索构件..." />
                <button aria-label="搜索"><SearchIcon /></button>
              </SearchBox>
              <Tree>
                <li>
                  <TreeItem><TreeToggle aria-label="折叠" /><BeamIcon /><TreeLabel>连梁</TreeLabel></TreeItem>
                  <ul>
                    <li><TreeItem><TreeStem /><GearIcon /><TreeLabel $selected><Latin>LL-1</Latin></TreeLabel></TreeItem></li>
                  </ul>
                </li>
              </Tree>
            </TreePanel>
            <PropertyPanel>
              <TabRow><PanelTab>属性编辑</PanelTab></TabRow>
              <GridFrame>
                <Table>
                  <colgroup>
                    <col width="22" /><col width="191" /><col width="126" /><col width="31" />
                  </colgroup>
                  <thead>
                    <tr>
                      <th scope="col" />
                      <th scope="col">属性名称</th>
                      <ValueHead scope="col">属性值</ValueHead>
                      <th scope="col">附加</th>
                    </tr>
                  </thead>
                  <tbody>
                    {rows.map((row, i) => <PropertyRow key={i} row={row} index={i + 1} />)}
                  </tbody>
                </Table>
                <ScrollBar>
                  <ScrollUp aria-label="向上滚动">
                    <svg width="9" height="6" fill="none" stroke="#4d6185" strokeWidth="2"><path d="M1 5l3.500-3.500L8 5" /></svg>
                  </ScrollUp>
                  <ScrollThumb />
                </ScrollBar>
              </GridFrame>
            </PropertyPanel>
          </EditorBody>
        </Editor>
      </Workspace>
      <Floating>
        <FloatingTitle>箍筋图</FloatingTitle>
        <Drawing>
          <path d="M260 13.500H60.500v213H260" stroke="#fff" />
          <rect x="71" y="24" width="170" height="192" stroke="#f00" strokeWidth="2" />
          <g fill="#f00">
            <circle cx="75" cy="28" r="5" /><circle cx="236" cy="28" r="5" />
            <circle cx="75" cy="212" r="5" /><circle cx="236" cy="212" r="5" />
          </g>
          <path d="M225 35l8-8M230 42l10-10" stroke="#f00" strokeWidth="2" />
          <path d="M67 65l14-7" stroke="#fff" /><path d="M67 65l3-4 3 3z" fill="#fff" />
          <g fill="#fff" fontFamily="Liberation Serif, serif" fontSize="20">
            <text x="80" y="59">1#</text>
            <text transform="translate(57 139) rotate(-90)" fontSize="18">H</text>
            <text x="146" y="245" fontSize="18">B</text>
            <text x="108" y="268" fontSize="24">2-1</text>
            <text x="148" y="268" fontSize="24" fontFamily="Noto Sans CJK SC, sans-serif" fontWeight="300">型</text>
          </g>
        </Drawing>
      </Floating>
    </CadWindow>
  );
}

const stats = [
  { label: '问得好', fg: '#d9506a', bg: '#ffd9df', icon: <path d="M2 8h4v9H2zM6 9l3-3V2q2-1 3 1v4h5q1 1 0 2v6l-1 2H6" /> },
  { label: '我收藏', fg: '#cf9d3c', bg: '#feebc8', icon: <path d="M10 1l2.700 5.900 6.300.8-4.600 4.400 1.200 6.400L10 15.400l-5.600 3.100 1.200-6.400L1 7.700l6.300-.8z" /> },
  { label: '我分享', fg: '#4596cc', bg: '#d3effe', icon: <path d="M9 2H2v15h16v-6M7 12q0-7 6-7V2l5 4-5 4V8q-4 0-6 4z" /> },
  { label: '我推荐', fg: '#4aa44a', bg: '#dbf8de', icon: <path d="M3 3h14v10H8l-5 4z" /> },
];

function Browser() {
  return (
    <BrowserWindow>
      <Bookmarks>
        <Bookmark>藏</Bookmark>
        <Caret $color="#777" $size={4} />
        <Bookmark><NavIcon />网址大全</Bookmark>
        <Bookmark><PageIcon />交通违法</Bookmark>
        <Bookmark><NumbersIcon /><span>软件-2345</span></Bookmark>
        <Bookmark><WeatherIcon />佛山天气</Bookmark>
        <svg width="24" height="10" fill="none" stroke="#888" strokeWidth="1.300"><path d="M7 0l5 5-5 5M12 0l5 5-5 5" /></svg>
        <Tools>
          <svg width="4" height="12" fill="#aaa"><path d="M1 0h2v2H1zM1 5h2v2H1zM1 10h2v2H1z" /></svg>
          <AppsIcon /><Caret $color="#777" $size={4} />
          <BookIcon /><CaptureIcon /><TranslateIcon />
          <Caret $color="#777" $size={4} />
          <GameIcon /><Caret $color="#777" $size={4} />
        </Tools>
      </Bookmarks>
      <TabStrip>
        <BrowserTab>
          <NavIcon /><TabTitle>360导航_新一代安全上网导航</TabTitle>
          <CloseButton aria-label="关闭标签"><svg width="9" height="9" stroke="#999"><path d="M1 1l7 7M8 1L1 8" /></svg></CloseButton>
        </BrowserTab>
        <BrowserTab $active>
          <SwirlIcon /><TabTitle $fade>剪力墙和连梁的问题_广联达服务</TabTitle>
          <CloseButton aria-label="关闭标签"><svg width="9" height="9" stroke="#999"><path d="M1 1l7 7M8 1L1 8" /></svg></CloseButton>
        </BrowserTab>
        <NewTab aria-label="新标签"><svg width="11" height="11" stroke="#666" strokeWidth="2"><path d="M5.500 0v11M0 5.500h11" /></svg></NewTab>
        <TabTools>
          <Icon stroke="#777" strokeWidth="1.500"><path d="M1 11V1h12M15 8V4H4v10h5M10 11l3 3 3-3" /></Icon>
          <svg width="12" height="16" fill="none" stroke="#777" strokeWidth="2"><path d="M5 1L1 5l4 4M1 5h8q5 1 5 5t-5 4H4" /></svg>
        </TabTools>
      </TabStrip>
      <Crumbs>
        <svg width="14" height="16" fill="none" stroke="#fff"><path d="M6 15.500Q1 9.500 1 6a5.500 5.500 0 0 1 11 0q0 3.500-6 9.500z" /><circle cx="6.500" cy="6" r="2.500" /></svg>
        <span><a href="#">答疑解惑</a> \<a href="#">我来搜</a> \<a href="#">问题详情</a></span>
      </Crumbs>
      <QuestionHead>
        <QuestionIcon viewBox="0 0 31 31">
          <rect width="31" height="31" rx="3" fill="#fdc40c" />
          <path d="M9.500 11.500Q9 5.500 15.500 5.500t6.500 5.500q0 3-3.500 5.500t-3 5" stroke="#fff" strokeWidth="2" />
          <circle cx="15.500" cy="25.500" r="1.500" fill="#fff" />
        </QuestionIcon>
        <h1>剪力墙和连梁的问题</h1>
      </QuestionHead>
      <QuestionBody>
        <Meta>浏览12 次 | 0 回答 | 0 答得好 | 0问得好</Meta>
        <Content>
          <span>连梁连着剪力墙，剪力墙的水平筋直接延伸到连梁内做腰筋了</span>
          <span>工地不这样施工</span>
        </Content>
        <Stats>
          {stats.map(s => (
            <Stat key={s.label} $fg={s.fg}>
              <Bubble $bg={s.bg}>
                <svg viewBox="0 0 20 20" fill="none" stroke="currentColor" strokeWidth="1.200">{s.icon}</svg>
                0
              </Bubble>
              {s.label}
            </Stat>
          ))}
        </Stats>
      </QuestionBody>
      <Notice>注：请在以下交流中文明用语，共创和谐交流圈！</Notice>
      <AnswerTitle>我来回答</AnswerTitle>
      <FormatBar>
        <BoldButton>B</BoldButton>
        <ImageButton aria-label="插入图片">
          <svg width="18" height="14" fill="none">
            <rect x=".5" y=".5" width="17" height="13" fill="#fff" stroke="#888" />
            <path d="M2 12V9l4-3 4 3 3-2 3 3v2z" fill="#1f8a60" /><circle cx="12.500" cy="4" r="1.800" fill="#e83c28" />
          </svg>
        </ImageButton>
      </FormatBar>
      <SideRail>
        <RailButton $gray aria-label="回到顶部">
          <svg width="20" height="18" fill="none" stroke="#fff" strokeWidth="2"><path d="M0 2h20M1 15l9-8 9 8" /></svg>
        </RailButton>
        <RailButton><span>意见反馈</span></RailButton>
        <RailButton><span>关注我们</span></RailButton>
        <RailButton><span>Q Q 咨询</span></RailButton>
      </SideRail>
    </BrowserWindow>
  );
}

export default function App() {
  return (
    <>
      <GlobalStyle />
      <Desktop>
        <Cad />
        <Browser />
        <Annotations aria-hidden="true">
          <path d="M170 259L144 180M270 373l338 2M1357 297L800 343 510 367" />
          <ellipse cx="1345" cy="269" rx="61" ry="44" />
          <g fill="#f00000" stroke="none">
            <path d="M139 168l12 9-12 5zM624 375l-18-6v12zM495 369l17-8 1 13z" />
          </g>
        </Annotations>
      </Desktop>
    </>
  );
}
